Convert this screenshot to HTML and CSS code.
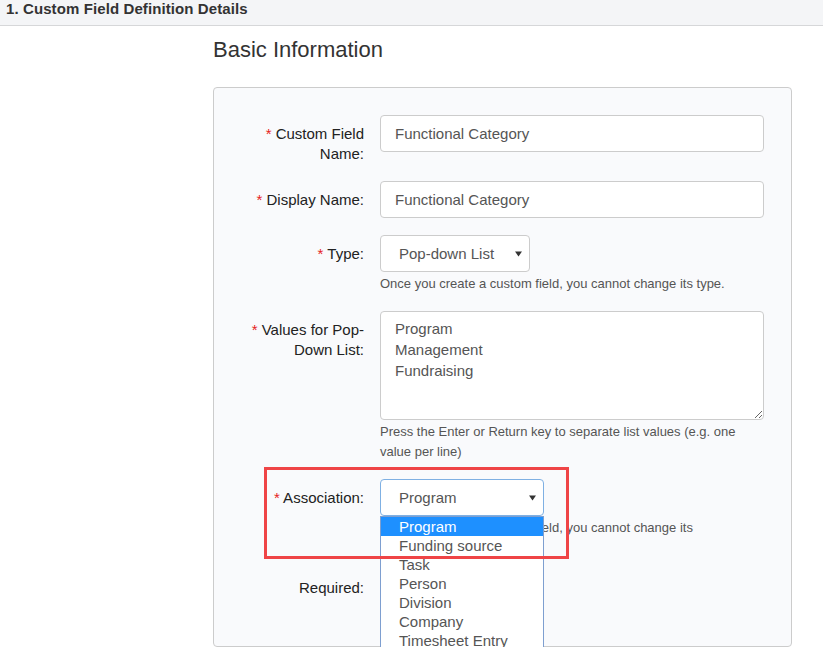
FILE: index.html
```html
<!DOCTYPE html>
<html lang="en">
<head>
<meta charset="utf-8">
<title>Custom Field Definition</title>
<link rel="stylesheet" href="styles.css">
</head>
<body>
<div class="section-head">1. Custom Field Definition Details</div>
<main class="content">
  <h2 class="section-title">Basic Information</h2>
  <div class="panel">
    <div class="form-group">
      <div class="field-label"><span class="req">*</span> Custom Field Name:</div>
      <div class="field"><input class="text-input" type="text" value="Functional Category"></div>
    </div>
    <div class="form-group">
      <div class="field-label"><span class="req">*</span> Display Name:</div>
      <div class="field"><input class="text-input" type="text" value="Functional Category"></div>
    </div>
    <div class="form-group">
      <div class="field-label"><span class="req">*</span> Type:</div>
      <div class="field">
        <div class="select select-type">
          <span>Pop-down List</span>
          <svg class="caret" width="7" height="6" viewBox="0 0 7 6"><polygon points="0,0.5 7,0.5 3.5,5.5" fill="#333"/></svg>
        </div>
        <p class="help">Once you create a custom field, you cannot change its type.</p>
      </div>
    </div>
    <div class="form-group">
      <div class="field-label"><span class="req">*</span> Values for Pop-Down List:</div>
      <div class="field">
        <textarea class="text-area">Program
Management
Fundraising</textarea>
        <p class="help">Press the Enter or Return key to separate list values (e.g. one value per line)</p>
      </div>
    </div>
    <div class="form-group assoc">
      <div class="field-label"><span class="req">*</span> Association:</div>
      <div class="field">
        <div class="select select-assoc is-open">
          <span>Program</span>
          <svg class="caret" width="7" height="6" viewBox="0 0 7 6"><polygon points="0,0.5 7,0.5 3.5,5.5" fill="#333"/></svg>
        </div>
        <p class="help">Once you create a custom field, you cannot change its<br>association.</p>
        <ul class="option-list">
          <li class="option is-active">Program</li>
          <li class="option">Funding source</li>
          <li class="option">Task</li>
          <li class="option">Person</li>
          <li class="option">Division</li>
          <li class="option">Company</li>
          <li class="option">Timesheet Entry</li>
        </ul>
      </div>
      <div class="callout"></div>
    </div>
    <div class="form-group required-row">
      <div class="field-label">Required:</div>
      <div class="field"></div>
    </div>
  </div>
</main>
</body>
</html>
```
FILE: styles.css
```css
html, body {
  margin: 0;
  padding: 0;
  background: #fff;
}

body {
  font-family: "Liberation Sans", Arial, sans-serif;
  color: #333;
}

.section-head {
  height: 26px;
  box-sizing: border-box;
  padding: 0 6px;
  background: #f4f5f7;
  border-bottom: 1px solid #d6d7d9;
  font-size: 15px;
  font-weight: bold;
  line-height: 17px;
  letter-spacing: 0.1px;
  color: #333;
}

.content {
  padding: 11px 31px 0 213px;
}

.section-title {
  margin: 0 0 24px;
  font-size: 22px;
  font-weight: normal;
  line-height: 26px;
  color: #333;
}

.panel {
  background: #f9fafc;
  border: 1px solid #ccc;
  border-radius: 4px;
  padding: 27px 27px 31px 0;
}

.form-group {
  display: grid;
  grid-template-columns: 150px 384px;
  column-gap: 16px;
  margin-bottom: 17px;
}

.field-label {
  padding: 9px 0 0 20px;
  font-size: 15px;
  line-height: 20px;
  text-align: right;
  color: #222;
}

.req {
  color: #e62222;
}

.field {
  position: relative;
}

.text-input {
  display: block;
  width: 100%;
  height: 37px;
  box-sizing: border-box;
  margin: 0;
  padding: 0 14px;
  border: 1px solid #ccc;
  border-radius: 4px;
  background: #fff;
  font-family: inherit;
  font-size: 15px;
  color: #555;
  outline: none;
}

.select {
  position: relative;
  display: flex;
  align-items: center;
  height: 37px;
  box-sizing: border-box;
  padding: 0 0 0 18px;
  border: 1px solid #ccc;
  border-radius: 4px;
  background: #fff;
  font-size: 15px;
  color: #555;
}

.select .caret {
  position: absolute;
  right: 7px;
  top: 15px;
}

.select-type {
  width: 150px;
}

.select-assoc {
  width: 164px;
}

.select.is-open {
  border-color: #7fb0e3;
}

.text-area {
  display: block;
  width: 100%;
  height: 109px;
  box-sizing: border-box;
  margin: 0;
  padding: 6px 14px;
  border: 1px solid #ccc;
  border-radius: 4px;
  background: #fff;
  font-family: inherit;
  font-size: 15px;
  line-height: 21px;
  color: #555;
  outline: none;
}

.help {
  margin: 2px 0 0;
  font-size: 13px;
  line-height: 20px;
  color: #555;
}

.option-list {
  position: absolute;
  left: 0;
  top: 37px;
  z-index: 2;
  width: 164px;
  box-sizing: border-box;
  margin: 0;
  padding: 0;
  list-style: none;
  background: #fff;
  border: 1px solid #7e9fd0;
}

.option {
  height: 19px;
  padding-left: 18px;
  font-size: 15px;
  line-height: 19px;
  color: #555;
}

.option.is-active {
  background: #1e90ff;
  color: #fff;
}

.assoc {
  position: relative;
}

.callout {
  position: absolute;
  left: 50px;
  top: -12px;
  z-index: 3;
  width: 305px;
  height: 92px;
  box-sizing: border-box;
  border: 3px solid #ef4446;
  pointer-events: none;
}

.required-row .field-label {
  padding-top: 3px;
}
```
